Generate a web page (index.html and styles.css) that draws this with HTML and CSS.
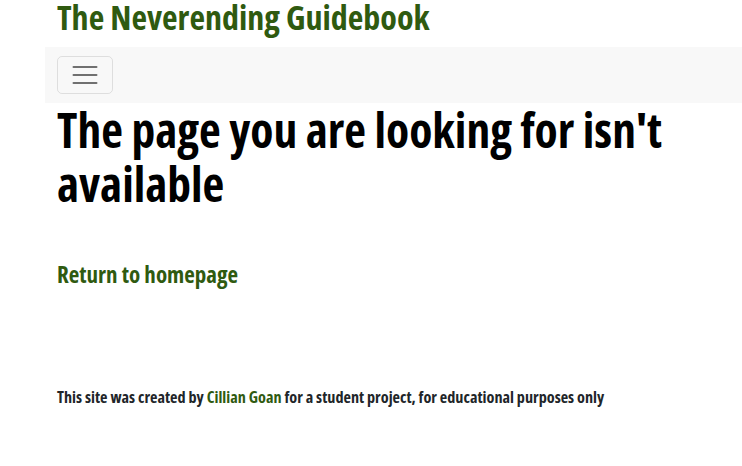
FILE: index.html
```html
<!DOCTYPE html>
<html lang="en">
<head>
<meta charset="utf-8">
<title>Page not found</title>
<link rel="stylesheet" href="styles.css">
</head>
<body>
<div class="page">
  <header class="site-header">
    <h2 class="site-title">The Neverending Guidebook</h2>
  </header>
  <nav class="navbar">
    <button class="toggler" type="button" aria-label="Toggle navigation">
      <svg width="30" height="30" viewBox="0 0 30 30"><path stroke="rgba(0,0,0,0.55)" stroke-linecap="round" stroke-miterlimit="10" stroke-width="2" d="M3.5 7h23M3.5 15h23M3.5 23h23"/></svg>
    </button>
  </nav>
  <main class="content">
    <h1 class="headline">The page you are looking for isn't available</h1>
    <a class="home-link" href="#">Return to homepage</a>
  </main>
  <footer class="footer">
    <p>This site was created by <a href="#">Cillian Goan</a> for a student project, for educational purposes only</p>
  </footer>
</div>
</body>
</html>
```
FILE: styles.css
```css
* { box-sizing: border-box; }
html, body { margin: 0; padding: 0; background: #fff; }
body {
  font-family: "Open Sans", "DejaVu Sans Condensed", sans-serif;
  font-stretch: 75%;
  font-weight: 700;
  color: #212529;
}
.page { padding-left: 45px; }
.site-header { padding: 0 12px; height: 47px; }
.site-title {
  margin: 0;
  font-size: 34px;
  line-height: 34px;
  color: #2f5a10;
  font-weight: 700;
}
.navbar {
  background: #f8f8f8;
  height: 56px;
  padding: 9px 12px;
  display: flex;
  align-items: flex-start;
}
.toggler {
  width: 56px;
  height: 38px;
  padding: 0;
  background: transparent;
  border: 1px solid rgba(0,0,0,0.1);
  border-radius: 5px;
  display: flex;
  align-items: center;
  justify-content: center;
}
.content { padding: 0 12px; }
.headline {
  margin: 0;
  font-size: 47.5px;
  line-height: 54px;
  color: #000;
  font-weight: 700;
}
.home-link {
  display: block;
  margin-top: 48px;
  font-size: 23px;
  line-height: 30px;
  color: #2f5a10;
  text-decoration: none;
}
.footer { padding: 0 12px; margin-top: 98px; }
.footer p { margin: 0; font-size: 16.2px; line-height: 20px; color: #212529; }
.footer a { color: #2f5a10; text-decoration: none; }
```
